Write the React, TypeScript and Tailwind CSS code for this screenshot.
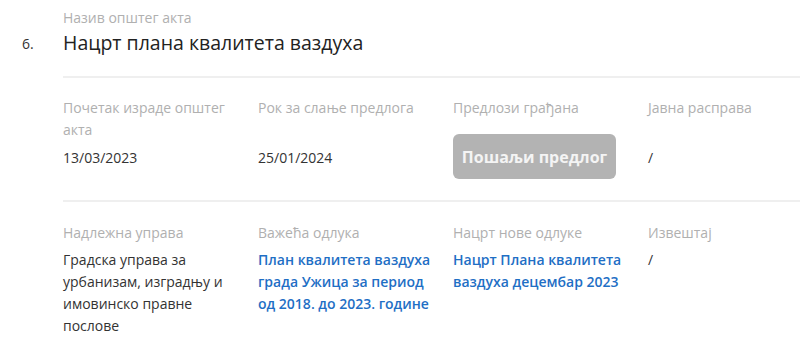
import React from "react";

const label = "text-[14px] leading-[22px] text-[#b0b0b0]";
const value = "text-[14px] leading-[22px] text-[#333333]";
const link = "text-[14px] leading-[22px] font-semibold text-[#1f6fc5]";

export default function App() {
  return (
    <div
      className="w-[800px] h-[358px] bg-white overflow-hidden flex"
      style={{ fontFamily: '"Open Sans", sans-serif' }}
    >
      <div className="w-[63px] shrink-0 pl-[22px] pt-[34px] text-[14px] leading-[20px] text-[#333333]">
        6.
      </div>
      <div className="flex-1 flex flex-col">
        <div className="pt-[7px] pb-[19px]">
          <div className={label}>Назив општег акта</div>
          <div className="text-[19.5px] leading-[28px] text-[#222222] font-medium">
            Нацрт плана квалитета ваздуха
          </div>
        </div>
        <div className="h-[2px] bg-[#efefef]" />
        <div className="grid grid-cols-[195px_195px_195px_1fr] pt-[19px] pb-[21px]">
          <div className="pr-[15px]">
            <div className={label}>Почетак израде општег акта</div>
            <div className={`${value} mt-[6px]`}>13/03/2023</div>
          </div>
          <div className="pr-[15px]">
            <div className={`${label} h-[44px]`}>Рок за слање предлога</div>
            <div className={`${value} mt-[6px]`}>25/01/2024</div>
          </div>
          <div className="pr-[15px]">
            <div className={label}>Предлози грађана</div>
            <button className="mt-[15px] w-[163px] h-[45px] rounded-[6px] bg-[#b3b3b3] text-[#f4f4f4] text-[16px] font-bold">
              Пошаљи предлог
            </button>
          </div>
          <div>
            <div className={`${label} h-[44px]`}>Јавна расправа</div>
            <div className={`${value} mt-[6px]`}>/</div>
          </div>
        </div>
        <div className="h-[2px] bg-[#efefef]" />
        <div className="grid grid-cols-[195px_195px_195px_1fr] pt-[20px]">
          <div className="pr-[15px]">
            <div className={label}>Надлежна управа</div>
            <div className={`${value} mt-[5px]`}>
              Градска управа за урбанизам, изградњу и имовинско правне послове
            </div>
          </div>
          <div className="pr-[15px]">
            <div className={label}>Важећа одлука</div>
            <div className={`${link} mt-[5px]`}>
              План квалитета ваздуха града Ужица за период од 2018. до 2023. године
            </div>
          </div>
          <div className="pr-[15px]">
            <div className={label}>Нацрт нове одлуке</div>
            <div className={`${link} mt-[5px]`}>
              Нацрт Плана квалитета ваздуха децембар 2023
            </div>
          </div>
          <div>
            <div className={label}>Извештај</div>
            <div className={`${value} mt-[5px]`}>/</div>
          </div>
        </div>
      </div>
    </div>
  );
}
